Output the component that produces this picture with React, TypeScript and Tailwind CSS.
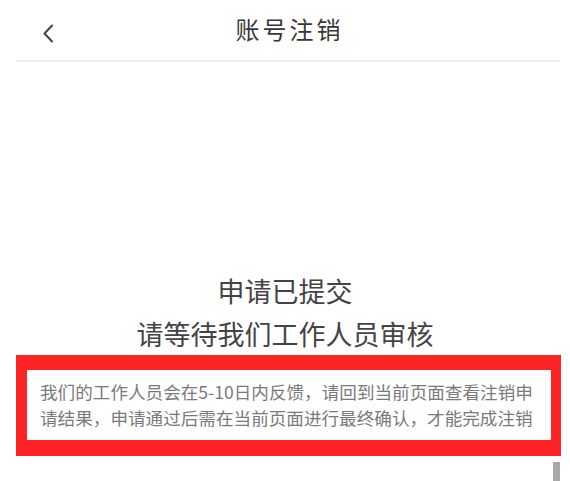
import React from 'react';

const BackIcon = ({ className }: { className?: string }) => (
  <svg className={className} xmlns="http://www.w3.org/2000/svg" viewBox="0 0 10 19" fill="none" stroke="currentColor" strokeWidth={2} strokeLinecap="round" strokeLinejoin="round">
    <path d="M9 1.5L1.5 9.5L9 17.5" />
  </svg>
);

const App: React.FC = () => {
  return (
    <div className="relative w-[570px] h-[481px] overflow-hidden bg-white font-['Noto_Sans_CJK_SC','Noto_Sans',sans-serif]">
      {/* Header */}
      <div className="ml-4 mr-[10px] h-[62px] flex items-center border-b-2 border-[#efefef] relative">
        <button className="absolute left-[27px] top-[24px] text-[#444]">
          <BackIcon className="w-[10px] h-[19px]" />
        </button>
        <h1 className="flex-1 text-center text-[24px] leading-none tracking-[3px] pl-[3px] text-[#383838] pb-[2px]">账号注销</h1>
      </div>

      {/* Status */}
      <div className="mt-[207px] flex flex-col items-center text-[27px] leading-[43px] text-[#444]">
        <p>申请已提交</p>
        <p>请等待我们工作人员审核</p>
      </div>

      {/* Notice */}
      <div className="ml-4 w-[545px] border-[#fe2424] border-t-[15px] border-b-[16px] border-l-[11px] border-r-[10px]">
        <div className="pl-[13px] pt-[9px] pb-[9px] text-[17.6px] leading-[26px] text-[#7a7a7a] whitespace-nowrap">
          <p>我们的工作人员会在5-10日内反馈，请回到当前页面查看注销申</p>
          <p>请结果，申请通过后需在当前页面进行最终确认，才能完成注销</p>
        </div>
      </div>

      {/* Scrollbar */}
      <div className="absolute left-[553px] top-[462px] w-[7px] h-[30px] bg-[#a9a9a9]" />
    </div>
  );
};

export default App;
